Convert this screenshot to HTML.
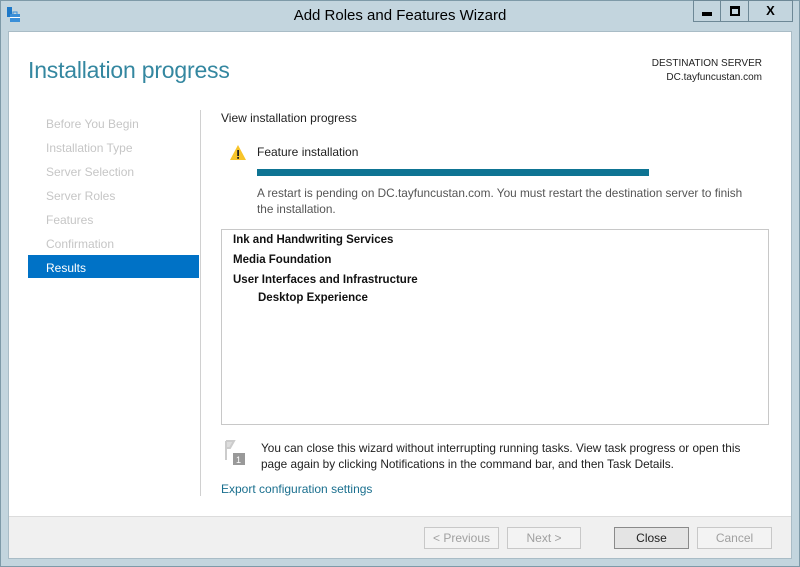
<!DOCTYPE html>
<html><head><meta charset="utf-8"><style>
*{margin:0;padding:0;box-sizing:border-box}
body{width:800px;height:567px;background:#c3d5de;font-family:"Liberation Sans",sans-serif;position:relative;overflow:hidden}
.abs{position:absolute}
.frame{left:0;top:0;width:800px;height:567px;border:1px solid #7e9aa8;}
.title{left:0;top:7px;width:800px;text-align:center;font-size:15px;color:#000}
.client{left:8px;top:31px;width:784px;height:528px;background:#fff;border:1px solid #a9bcc6}
.footer{left:9px;top:516px;width:782px;height:42px;background:#f0f0f0;border-top:1px solid #dcdcdc}
.h1{left:28px;top:57px;font-size:23px;color:#3487a0;font-weight:normal;letter-spacing:-0.2px}
.dest{right:38px;top:57px;font-size:10px;color:#222;text-align:right;line-height:14px}
.nav{left:46px;font-size:12px;color:#c6c6c6}
.sel{left:28px;top:255px;width:171px;height:23px;background:#0072c6}
.sep{left:200px;top:110px;width:1px;height:386px;background:#d0d0d0}
.t{font-size:12px;color:#222}
.g{font-size:12px;color:#555}
.box{left:221px;top:229px;width:548px;height:196px;border:1px solid #c8c8c8}
.b{font-size:11.5px;font-weight:bold;color:#111}
.btn{top:527px;height:22px;border:1px solid #c8c8c8;background:#f3f3f3;font-size:12px;color:#a0a0a0;text-align:center;line-height:20px}
.wb{top:0;height:22px;border:1px solid #6d8896;background:#c3d5de;}
</style></head><body>
<div class="abs frame"></div>
<svg class="abs" style="left:6px;top:6px" width="16" height="18"><rect x="1" y="1" width="5" height="10" fill="#1e79c8"/><rect x="4" y="8" width="10" height="8" fill="#3a8fd8"/><rect x="7" y="6" width="4" height="3" fill="none" stroke="#3a8fd8"/><rect x="4" y="11" width="10" height="1" fill="#fff"/></svg>
<div class="abs title">Add Roles and Features Wizard</div>
<div class="abs wb" style="left:693px;width:28px"><div class="abs" style="left:8px;top:11px;width:10px;height:4px;background:#000"></div></div>
<div class="abs wb" style="left:720px;width:29px"><div class="abs" style="left:9px;top:5px;width:10px;height:10px;border:2px solid #000;border-top-width:3px"></div></div>
<div class="abs wb" style="left:748px;width:45px;font-size:13px;font-weight:bold;text-align:center;line-height:20px">X</div>
<div class="abs client"></div>
<div class="abs h1">Installation progress</div>
<div class="abs dest">DESTINATION SERVER<br>DC.tayfuncustan.com</div>
<div class="abs nav" style="top:117px">Before You Begin</div>
<div class="abs nav" style="top:141px">Installation Type</div>
<div class="abs nav" style="top:165px">Server Selection</div>
<div class="abs nav" style="top:189px">Server Roles</div>
<div class="abs nav" style="top:213px">Features</div>
<div class="abs nav" style="top:237px">Confirmation</div>
<div class="abs sel"></div>
<div class="abs nav" style="top:261px;color:#fff">Results</div>
<div class="abs sep"></div>
<div class="abs t" style="left:221px;top:111px">View installation progress</div>
<svg class="abs" style="left:229px;top:144px" width="18" height="17"><path d="M9 1 L17 16 L1 16 Z" fill="#f7c42a"/><rect x="8.2" y="6" width="1.8" height="6" fill="#222"/><rect x="8.2" y="13" width="1.8" height="1.8" fill="#222"/></svg>
<div class="abs t" style="left:257px;top:145px">Feature installation</div>
<div class="abs" style="left:257px;top:169px;width:392px;height:7px;background:#0e7493"></div>
<div class="abs g" style="left:257px;top:185px;line-height:16px;font-size:11.8px">A restart is pending on DC.tayfuncustan.com. You must restart the destination server to finish<br>the installation.</div>
<div class="abs box"></div>
<div class="abs b" style="left:233px;top:234px">Ink and Handwriting Services</div>
<div class="abs b" style="left:233px;top:254px">Media Foundation</div>
<div class="abs b" style="left:233px;top:274px">User Interfaces and Infrastructure</div>
<div class="abs b" style="left:258px;top:292px">Desktop Experience</div>
<svg class="abs" style="left:224px;top:440px" width="22" height="26"><path d="M2 1 L2 20 M2 1 L10 1 L6 8 L2 8" fill="#ddd" stroke="#ccc" stroke-width="2"/><rect x="9" y="13" width="12" height="12" fill="#999"/><text x="12" y="23" font-size="9" fill="#fff" font-family="Liberation Sans">1</text></svg>
<div class="abs t" style="left:261px;top:440px;line-height:16px;font-size:11.8px">You can close this wizard without interrupting running tasks. View task progress or open this<br>page again by clicking Notifications in the command bar, and then Task Details.</div>
<div class="abs" style="left:221px;top:482px;font-size:12px;color:#1a6f8e">Export configuration settings</div>
<div class="abs footer"></div>
<div class="abs btn" style="left:424px;width:75px">&lt; Previous</div>
<div class="abs btn" style="left:507px;width:74px">Next &gt;</div>
<div class="abs btn" style="left:614px;width:75px;background:#e4e4e4;border-color:#8a8a8a;color:#222">Close</div>
<div class="abs btn" style="left:697px;width:75px">Cancel</div>
</body></html>
